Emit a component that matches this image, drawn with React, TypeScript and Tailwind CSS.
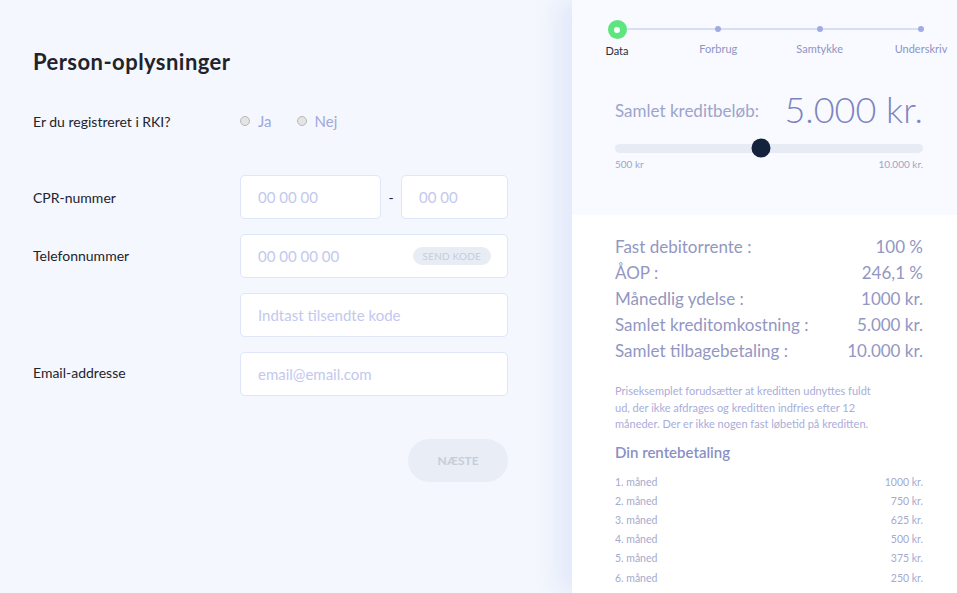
import React from 'react'

const steps = ['Data', 'Forbrug', 'Samtykke', 'Underskriv']

const terms = [
  ['Fast debitorrente :', '100 %'],
  ['ÅOP :', '246,1 %'],
  ['Månedlig ydelse :', '1000 kr.'],
  ['Samlet kreditomkostning :', '5.000 kr.'],
  ['Samlet tilbagebetaling :', '10.000 kr.'],
]

const months = [
  ['1. måned', '1000 kr.'],
  ['2. måned', '750 kr.'],
  ['3. måned', '625 kr.'],
  ['4. måned', '500 kr.'],
  ['5. måned', '375 kr.'],
  ['6. måned', '250 kr.'],
]

function Field({ placeholder, className = '', children }: { placeholder: string; className?: string; children?: React.ReactNode }) {
  return (
    <div className={`h-[44px] bg-white border border-[#dfe6f7] rounded-[5px] flex items-center pl-[17px] pr-[16px] ${className}`}>
      <span className="flex-1 text-[15px] text-[#c3c8ee]">{placeholder}</span>
      {children}
    </div>
  )
}

function Radio({ label }: { label: string }) {
  return (
    <label className="flex items-center gap-[8px]">
      <span className="w-[10px] h-[10px] rounded-full bg-[#e4e4e4] border border-[#b8b8b8]" />
      <span className="text-[15px] text-[#a2a7dc]">{label}</span>
    </label>
  )
}

export default function App() {
  const min = 500
  const max = 10000
  const value = 5000
  const pct = ((value - min) / (max - min)) * 100

  return (
    <div className="flex w-[957px] h-[593px] overflow-hidden bg-[#f4f7fd] font-['Lato',sans-serif]">
      {/* form */}
      <div className="flex-1 pl-[33px] pt-[48px]">
        <h1 className="text-[22px] leading-[28px] font-bold text-[#1e232c] tracking-[0.45px]">Person-oplysninger</h1>

        <div className="grid grid-cols-[207px_268px] items-center gap-y-[15px] mt-[23px] text-[14px] text-[#1e232c]">
          <div className="h-[44px] flex items-center">Er du registreret i RKI?</div>
          <div className="h-[44px] flex items-center gap-[25px]">
            <Radio label="Ja" />
            <Radio label="Nej" />
          </div>

          <div className="mt-[17px]">CPR-nummer</div>
          <div className="mt-[17px] flex items-center">
            <Field placeholder="00 00 00" className="w-[141px]" />
            <span className="flex-1 text-center text-[#1e232c]">-</span>
            <Field placeholder="00 00" className="w-[107px]" />
          </div>

          <div className="-mt-[1px]">Telefonnummer</div>
          <Field placeholder="00 00 00 00">
            <span className="h-[18px] px-[10px] rounded-full bg-[#e8edf5] text-[10px] leading-[18px] text-[#c5ccd9] tracking-[0.2px]">SEND KODE</span>
          </Field>

          <div />
          <Field placeholder="Indtast tilsendte kode" />

          <div className="-mt-[3px]">Email-addresse</div>
          <Field placeholder="email@email.com" />

          <div />
          <div className="flex justify-end mt-[28px]">
            <button className="w-[100px] h-[43px] rounded-full bg-[#e8edf6] text-[12px] font-bold text-[#c6cdd9]">NÆSTE</button>
          </div>
        </div>
      </div>

      {/* summary panel */}
      <div className="w-[385px] flex flex-col bg-white shadow-[-14px_0_22px_rgba(205,216,246,0.45)]">
        <div className="h-[215px] bg-[#f8faff] pl-[43px] pr-[34px]">
          <div className="relative mx-[2px] mt-[20px] h-[18px]">
            <div className="absolute left-0 right-0 top-[8px] h-[2px] bg-[#d8def5]" />
            <div className="relative flex justify-between h-[18px]">
              {steps.map((s, i) => (
                <div key={s} className="w-0 flex flex-col items-center">
                  {i === 0 ? (
                    <span className="w-[19px] h-[19px] shrink-0 rounded-full bg-[#5de57f] flex items-center justify-center">
                      <span className="w-[6px] h-[6px] rounded-full bg-white" />
                    </span>
                  ) : (
                    <span className="mt-[6px] w-[6px] h-[6px] shrink-0 rounded-full bg-[#a2aae3]" />
                  )}
                  <span className={`text-[11px] whitespace-nowrap ${i === 0 ? 'text-[#2a2f3a] mt-[4px]' : 'text-[#8f94c4] mt-[9px]'}`}>{s}</span>
                </div>
              ))}
            </div>
          </div>

          <div className="flex items-center justify-between mt-[49px]">
            <span className="text-[17px] text-[#9ea4ca] mt-[4px]">Samlet kreditbeløb:</span>
            <span className="text-[36px] leading-[44px] font-light text-[#7c84c0]">5.000 kr.</span>
          </div>

          <div className="relative h-[9px] mt-[13px] rounded-full bg-[#e7ebf4]">
            <span
              className="absolute top-[4px] w-[19px] h-[19px] -translate-x-1/2 -translate-y-1/2 rounded-full bg-[#14223b]"
              style={{ left: `${pct}%` }}
            />
          </div>
          <div className="flex justify-between mt-[4px] text-[10px] text-[#9ea4ca]">
            <span>500 kr</span>
            <span>10.000 kr.</span>
          </div>
        </div>

        <div className="pl-[43px] pr-[34px] pt-[19px]">
          <div className="flex flex-col">
            {terms.map(([k, v]) => (
              <div key={k} className="flex justify-between h-[26px] items-center text-[17px] text-[#9297c2]">
                <span>{k}</span>
                <span>{v}</span>
              </div>
            ))}
          </div>

          <p className="mt-[19px] w-[265px] text-[11px] leading-[16.5px] text-[#a9addb]">
            Priseksemplet forudsætter at kreditten udnyttes fuldt ud, der ikke afdrages og kreditten indfries efter 12 måneder. Der er ikke nogen fast løbetid på kreditten.
          </p>

          <h2 className="mt-[8px] text-[15px] font-semibold text-[#8a8fc5]">Din rentebetaling</h2>

          <div className="mt-[10px] flex flex-col">
            {months.map(([k, v]) => (
              <div key={k} className="flex justify-between h-[19.2px] items-center text-[10.5px] text-[#a6aacd]">
                <span>{k}</span>
                <span>{v}</span>
              </div>
            ))}
          </div>
        </div>
      </div>
    </div>
  )
}
